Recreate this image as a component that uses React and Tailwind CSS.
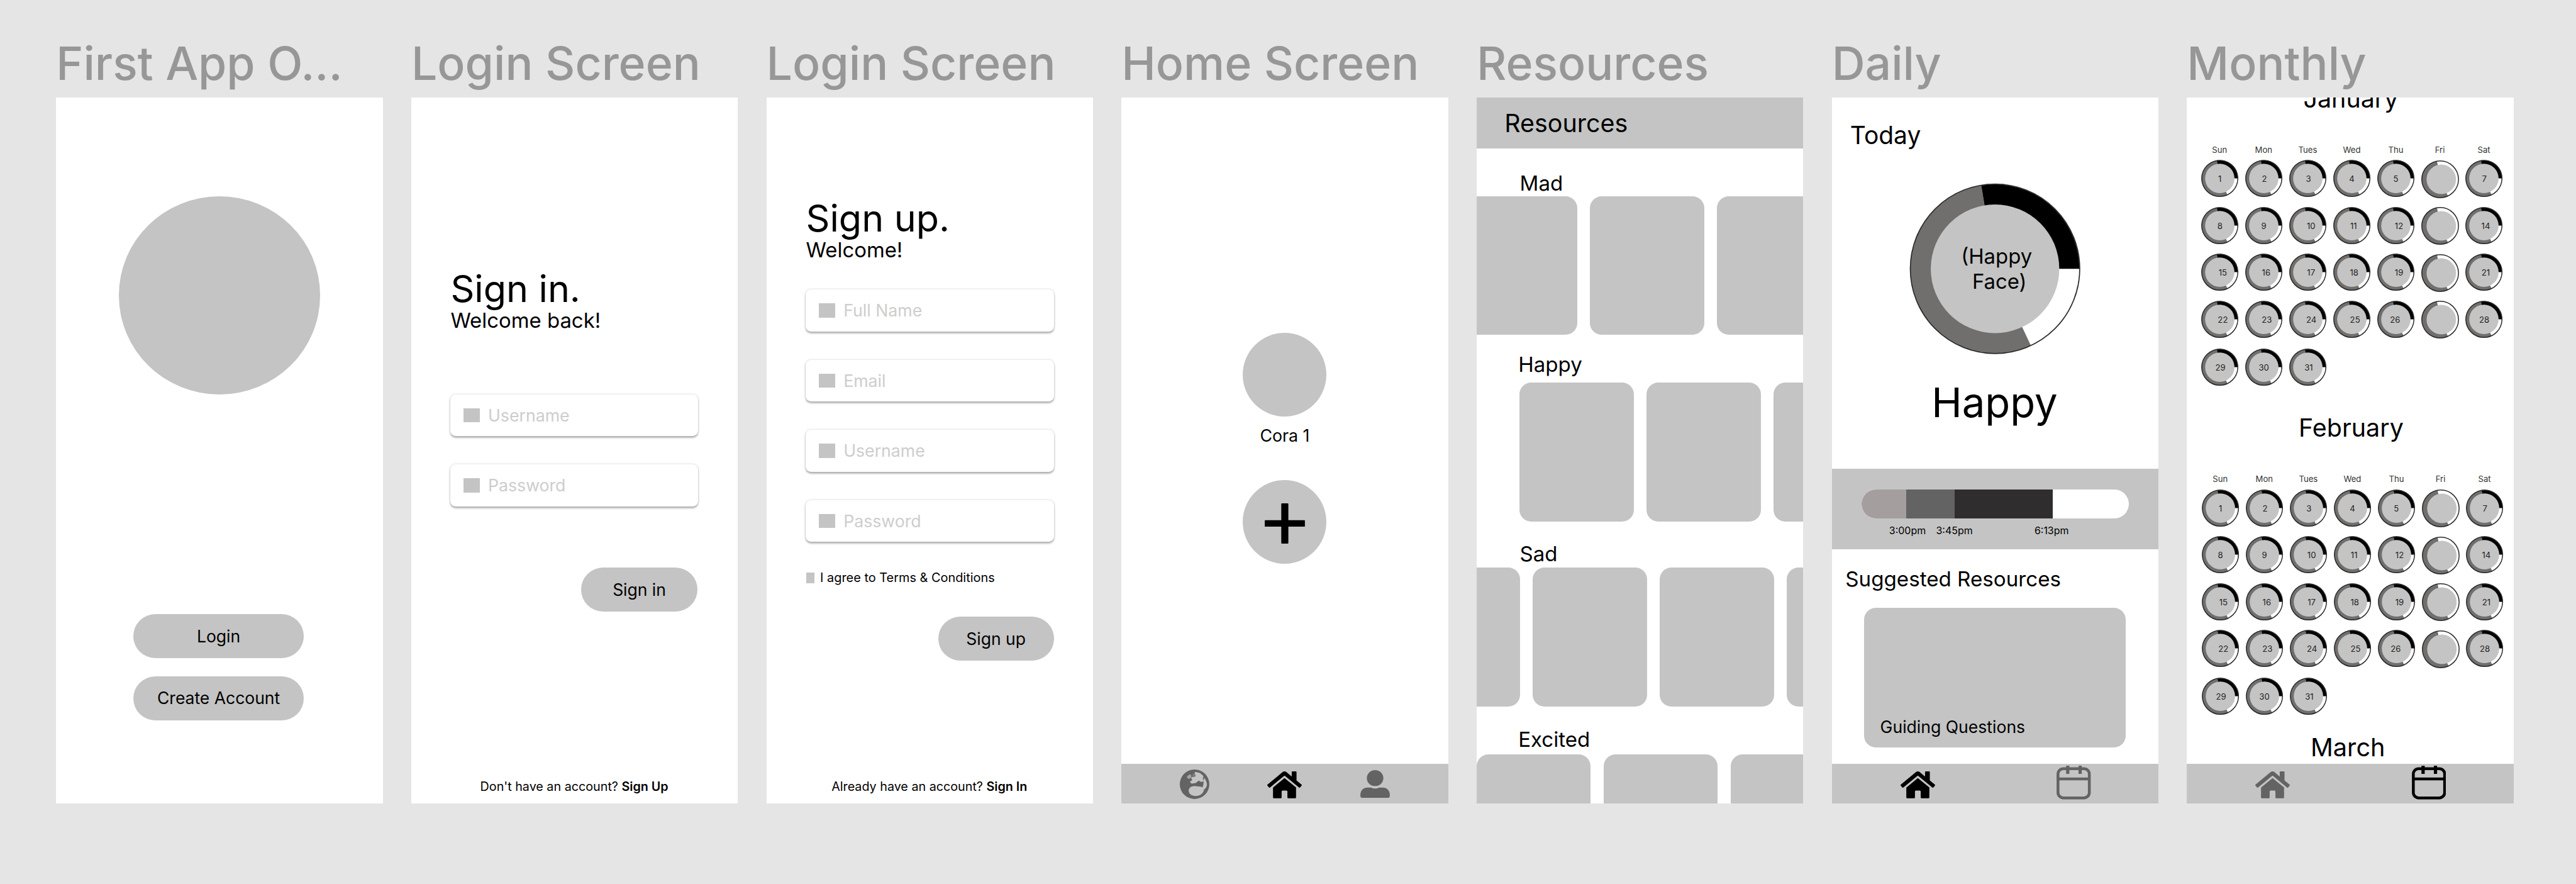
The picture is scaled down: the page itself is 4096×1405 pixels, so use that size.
import React from "react";
import { FaHome } from "react-icons/fa";

function Frame({ title, children }) {
  return (
    <section className="w-[552.8px] shrink-0">
      <h2 className="h-[97px] text-[78px] leading-none font-medium text-[#979797] whitespace-nowrap">{title}</h2>
      <div className="flex h-[1194px] flex-col overflow-hidden bg-white">{children}</div>
    </section>
  );
}

function Pill({ className, children }) {
  return (
    <div className={`flex h-[74.5px] items-center justify-center rounded-full bg-[#c4c4c4] text-[28.2px] leading-none ${className}`}>
      {children}
    </div>
  );
}

function Field({ label }) {
  return (
    <div className="flex h-[71px] w-[420px] items-center gap-[14px] rounded-[9px] bg-white pl-[22px] shadow-[0_3px_3px_rgba(0,0,0,0.26),0_0_4px_rgba(0,0,0,0.18)]">
      <span className="h-6 w-7 bg-[#c4c4c4]" />
      <span className="text-[28.4px] leading-none text-[#cdcdcd]">{label}</span>
    </div>
  );
}

function NavBar({ children }) {
  return <nav className="flex h-[66.5px] shrink-0 items-start bg-[#c4c4c4]">{children}</nav>;
}

function GlobeIcon({ className }) {
  return (
    <svg viewBox="0 0 52 52" className={className}>
      <circle cx="26" cy="26" r="25" fill="#636363" />
      <path d="M27 5 L35 7 L41 12 L40 17 L42 21 L37 22 L33 20 L28 24 L21 25 L18 22 L22 19 L20 15 L24 13 Z" fill="#c4c4c4" />
      <path d="M13 13 L18 9 L21 12 L19 16 L15 17 Z" fill="#a5a5a5" />
      <circle cx="25" cy="11" r="2.800" fill="#7b7b7b" />
      <path d="M42 15 Q46.500 20 47 27 Q46 33 42 35 L39.500 31 L41 26 Z" fill="#c4c4c4" />
      <path d="M16 36 Q17 30 25 29 L36 30 Q42 31 42 35 Q41 41 35 44.500 Q28 47.500 21 44.500 Q16 42 16 36 Z" fill="#c4c4c4" />
    </svg>
  );
}

function PersonIcon({ className }) {
  return (
    <svg viewBox="0 0 50 47" className={className} fill="#636363">
      <ellipse cx="25" cy="13.500" rx="14" ry="13.500" />
      <path d="M0 43 Q0 36 4 32.500 Q7 29.500 12 29.500 H18 Q25 33 32 29.500 H38 Q43 29.500 46 32.500 Q50 36 50 43 Q50 47 46.500 47 H3.500 Q0 47 0 43 Z" />
    </svg>
  );
}

function CalendarIcon({ color, className }) {
  return (
    <svg viewBox="0 0 58 58" className={className} fill="none" stroke={color} strokeWidth="4.800">
      <rect x="2.500" y="6" width="53" height="49.500" rx="9" />
      <path d="M2.500 23.500 H55.500" />
      <path d="M19 1 V15 M40 1 V15" strokeWidth="5.500" />
    </svg>
  );
}

// Angles run clockwise from twelve o'clock, in degrees.
function arc(r, from, to) {
  const point = (deg) => {
    const a = ((deg - 90) * Math.PI) / 180;
    return `${(100 + r * Math.cos(a)).toFixed(2)} ${(100 + r * Math.sin(a)).toFixed(2)}`;
  };
  return `M100 100 L${point(from)} A${r} ${r} 0 ${to - from > 180 ? 1 : 0} 1 ${point(to)} Z`;
}

function MoodRing({ className, inner = 75, shift = 0, outline = 1.3, morning = "#000" }) {
  return (
    <svg viewBox="0 0 200 200" className={className}>
      <circle cx="100" cy="100" r="98" fill="#fff" />
      <path d={arc(98.5, 155, 350.6)} fill="#716f6d" />
      <path d={arc(98.5, 350.6, 450)} fill={morning} />
      <circle cx="100" cy="100" r={99.5 - outline / 2} fill="none" stroke="#2b2b2b" strokeWidth={outline} />
      <circle cx={100 + shift} cy="100" r={inner} fill="#c4c4c4" />
    </svg>
  );
}

function Welcome() {
  return (
    <Frame title="First App O...">
      <div className="mt-[167px] ml-[106px] h-[335px] w-[341px] rounded-[50%] bg-[#c4c4c4]" />
      <Pill className="mt-[372px] ml-[131px] w-[288px]">Login</Pill>
      <Pill className="mt-[30.5px] ml-[131px] w-[288px]">Create Account</Pill>
    </Frame>
  );
}

function SignIn() {
  return (
    <Frame title="Login Screen">
      <h3 className="mt-[292px] ml-[66.5px] text-[63px] leading-none">Sign in.</h3>
      <p className="mt-[4.5px] ml-[66.5px] text-[35px] leading-none">Welcome back!</p>
      <div className="mt-[107.5px] ml-[66px] flex flex-col gap-[48px]">
        <Field label="Username" />
        <Field label="Password" />
      </div>
      <Pill className="mt-[103.5px] ml-[288px] w-[196px]">Sign in</Pill>
      <p className="mt-auto mb-[17.5px] pr-px text-center text-[21px] leading-none">
        Don't have an account? <span className="font-semibold">Sign Up</span>
      </p>
    </Frame>
  );
}

function SignUp() {
  return (
    <Frame title="Login Screen">
      <h3 className="mt-[172.8px] ml-[67px] text-[63px] leading-none">Sign up.</h3>
      <p className="mt-[4.5px] ml-[67px] text-[35px] leading-none">Welcome!</p>
      <div className="mt-[49.500px] ml-[66.5px] flex flex-col gap-[47.7px]">
        <Field label="Full Name" />
        <Field label="Email" />
        <Field label="Username" />
        <Field label="Password" />
      </div>
      <div className="mt-[50.5px] ml-[67px] flex items-center gap-[10px] text-[21.2px] leading-none">
        <span className="h-[18px] w-[14px] bg-[#c4c4c4]" />
        I agree to Terms &amp; Conditions
      </div>
      <Pill className="mt-[55px] ml-[290.5px] w-[196px]">Sign up</Pill>
      <p className="mt-auto mb-[17.5px] pr-px text-center text-[21px] leading-none">
        Already have an account? <span className="font-semibold">Sign In</span>
      </p>
    </Frame>
  );
}

function Home() {
  return (
    <Frame title="Home Screen">
      <div className="flex flex-1 flex-col items-center pt-[398px]">
        <div className="size-[141.5px] rounded-full bg-[#c4c4c4]" />
        <p className="mt-[18px] text-[28.5px] leading-none">Cora 1</p>
        <div className="mt-[61px] flex size-[141.5px] items-center justify-center rounded-full bg-[#c4c4c4] pt-[6px]">
          <svg viewBox="0 0 68 68" className="size-[68px]">
            <rect x="28" width="12" height="68" rx="1" />
            <rect y="28.500" width="68" height="11" rx="1" />
          </svg>
        </div>
      </div>
      <NavBar>
        <GlobeIcon className="mt-[8px] ml-[97.5px] size-[52px]" />
        <FaHome className="mt-[9.5px] ml-[97px] h-[52px] w-[58.5px]" />
        <PersonIcon className="mt-[10.500px] ml-[99px] h-[47px] w-[50px]" />
      </NavBar>
    </Frame>
  );
}

function ResourceRow({ label, labelClass, rowClass, count }) {
  return (
    <>
      <h3 className={`text-[35.2px] leading-none ${labelClass}`}>{label}</h3>
      <div className={`flex shrink-0 gap-[21.7px] ${rowClass}`}>
        {Array.from({ length: count }, (_, i) => (
          <div key={i} className="h-[235px] w-[193.5px] shrink-0 rounded-[20px] bg-[#c4c4c4]" />
        ))}
      </div>
    </>
  );
}

function Resources() {
  return (
    <Frame title="Resources">
      <header className="h-[85.8px] shrink-0 bg-[#c4c4c4] pt-[23.5px] pl-[47px] text-[42px] leading-none">Resources</header>
      <ResourceRow label="Mad" labelClass="mt-[42.2px] ml-[73px]" rowClass="mt-[3.600px] ml-[-23.5px]" count={3} />
      <ResourceRow label="Happy" labelClass="mt-[32.300px] ml-[70.5px]" rowClass="mt-[13px] ml-[72.5px]" count={3} />
      <ResourceRow label="Sad" labelClass="mt-[37.200px] ml-[73px]" rowClass="mt-[5.800px] ml-[-120.500px]" count={4} />
      <ResourceRow label="Excited" labelClass="mt-[38px] ml-[70.5px]" rowClass="mt-[7.300px] ml-[-0.500px]" count={3} />
    </Frame>
  );
}

function Daily() {
  return (
    <Frame title="Daily">
      <div className="flex-1 overflow-hidden">
        <h3 className="mt-[43px] ml-[31px] text-[41.5px] leading-none">Today</h3>
        <div className="mt-[60.500px] grid justify-center">
          <MoodRing className="col-start-1 row-start-1 size-[290px]" />
          <p className="col-start-1 row-start-1 self-center pb-[1px] pl-[5px] text-center text-[35px] leading-[42.7px]">
            (Happy
            <br />
            &nbsp;Face)
          </p>
        </div>
        <p className="mt-[46.5px] pr-[2px] text-center text-[69.5px] leading-none">Happy</p>
        <div className="mt-[77.500px] h-[135.5px] bg-[#c4c4c4] pt-[34.600px]">
          <div className="ml-[50.3px] flex h-[49.5px] w-[453px] overflow-hidden rounded-full bg-white">
            <span className="w-[76px] bg-[#a49f9e]" />
            <span className="w-[81.5px] bg-[#636363]" />
            <span className="w-[166px] bg-[#302d2e]" />
          </div>
          <div className="mt-[12px] flex text-[17px] leading-none">
            <span className="ml-[97px] w-[79.5px]">3:00pm</span>
            <span className="w-[166.5px]">3:45pm</span>
            <span>6:13pm</span>
          </div>
        </div>
        <h3 className="mt-[33.5px] ml-[23px] text-[35.3px] leading-none">Suggested Resources</h3>
        <div className="mt-[31px] ml-[54.4px] h-[236px] w-[443px] rounded-[20px] bg-[#c4c4c4] pt-[186.500px] pl-[27.5px] text-[28.3px] leading-none">
          Guiding Questions
        </div>
      </div>
      <NavBar>
        <FaHome className="mt-[9.5px] ml-[116px] h-[52px] w-[58.5px]" />
        <CalendarIcon color="#636363" className="mt-[2px] ml-[206px] size-[58px]" />
      </NavBar>
    </Frame>
  );
}

const WEEKDAYS = ["Sun", "Mon", "Tues", "Wed", "Thu", "Fri", "Sat"];

// Horizontal nudge of each day's number from the middle of its ring.
const NUDGE = {
  2: 1, 3: 1, 7: 1, 10: 5.5, 11: 3, 12: 5.5, 14: 3.5, 15: 5, 16: 4, 17: 5.5, 18: 4,
  19: 5.5, 21: 3.5, 22: 5, 23: 5, 24: 6, 25: 5.5, 26: -1, 28: 1, 29: 1, 31: 1.5,
};

function Day({ day }) {
  const friday = day % 7 === 6;
  return (
    <div className="grid h-[79.2px] place-items-center">
      <MoodRing
        className={friday ? "col-start-1 row-start-1 size-[64px] translate-x-[1px] translate-y-[1px]" : "col-start-1 row-start-1 size-[63px]"}
        inner={friday ? 78 : 79}
        shift={friday ? 6 : 0}
        outline={5}
        morning={friday ? "#fff" : "#000"}
      />
      {!friday && (
        <span
          className="col-start-1 row-start-1 pt-[2px] text-[14px] leading-none text-[#222]"
          style={{ transform: `translateX(${NUDGE[day] || 0}px)` }}
        >
          {day}
        </span>
      )}
    </div>
  );
}

function Month({ name, className }) {
  return (
    <div className={className}>
      <h3 className="pl-[2px] text-center text-[42px] leading-none">{name}</h3>
      <div className="mt-[58px] ml-[18px] grid w-[522px] grid-cols-7 text-center text-[14px] leading-none text-[#333]">
        {WEEKDAYS.map((d) => (
          <span key={d}>{d}</span>
        ))}
      </div>
      <div className="mt-[2px] ml-[18.500px] grid w-[521px] grid-cols-7">
        {Array.from({ length: 28 }, (_, i) => (
          <Day key={i} day={i + 1} />
        ))}
      </div>
      <div className="mt-[1.800px] ml-[18.500px] grid w-[521px] grid-cols-7">
        <Day day={29} />
        <Day day={30} />
        <Day day={31} />
      </div>
    </div>
  );
}

function Monthly() {
  return (
    <Frame title="Monthly">
      <div className="flex-1 overflow-hidden">
        <Month name="January" className="-mt-[18.300px]" />
        <Month name="February" className="mt-[43.600px] pl-px" />
        <h3 className="mt-[27px] pr-[8px] text-center text-[42.3px] leading-none">March</h3>
      </div>
      <NavBar>
        <FaHome className="mt-[9.5px] ml-[116px] h-[52px] w-[58.5px] text-[#636363]" />
        <CalendarIcon color="#000" className="mt-[2px] ml-[206px] size-[58px]" />
      </NavBar>
    </Frame>
  );
}

export default function App() {
  return (
    <main className="flex h-[1496px] w-[4360px] gap-[48.3px] overflow-hidden bg-[#e5e5e5] pt-[68px] pl-[95px] font-['Inter',sans-serif] text-black [zoom:0.93945]">
      <Welcome />
      <SignIn />
      <SignUp />
      <Home />
      <Resources />
      <Daily />
      <Monthly />
    </main>
  );
}
